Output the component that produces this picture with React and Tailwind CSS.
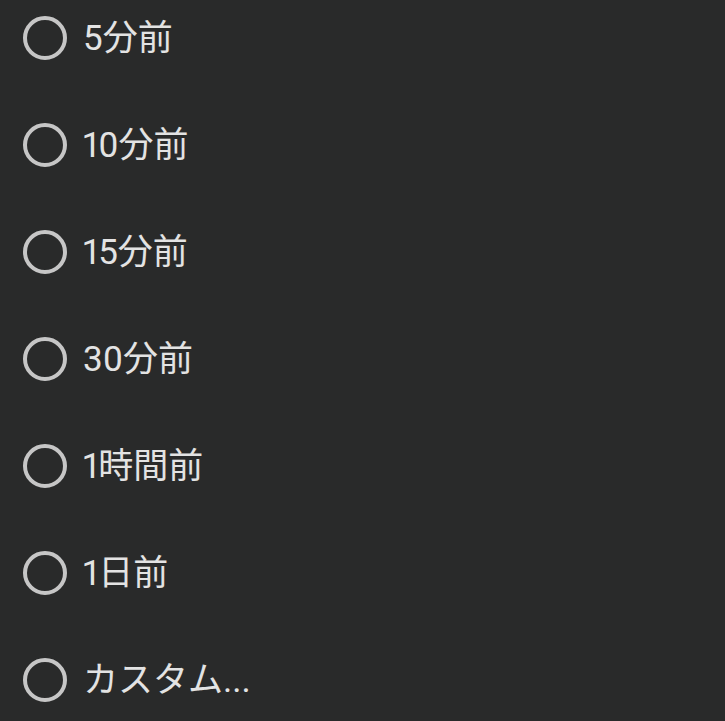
import { useState } from "react";

const options = ["5分前", "10分前", "15分前", "30分前", "1時間前", "1日前", "カスタム..."];

export default function App() {
  const [selected, setSelected] = useState(null);

  return (
    <div
      className="min-h-[721px] w-[725px] bg-[#292a2a] overflow-hidden"
      style={{ fontFamily: 'Roboto, "Noto Sans CJK JP", sans-serif' }}
    >
      <div className="flex flex-col gap-[63px] pt-[16px]">
        {options.map((label, i) => (
          <button
            key={label}
            onClick={() => setSelected(i)}
            className="flex items-center h-[44px] pl-[23px] text-left"
          >
            <span className="flex items-center justify-center w-[44px] h-[44px] rounded-full border-[4px] border-[#c6c6c6] shrink-0">
              {selected === i && <span className="w-[22px] h-[22px] rounded-full bg-[#c6c6c6]" />}
            </span>
            <span className="ml-[16px] text-[35px] leading-none text-[#e3e3e3] proportional-nums">{label}</span>
          </button>
        ))}
      </div>
    </div>
  );
}
